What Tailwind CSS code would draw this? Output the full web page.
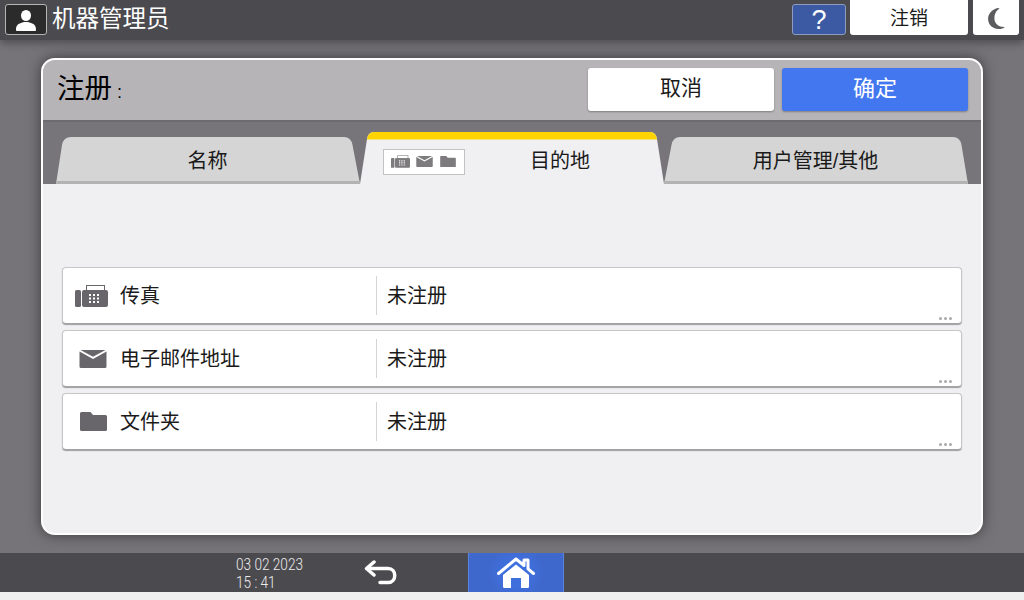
<!DOCTYPE html>
<html lang="zh-CN">
<head>
  <meta charset="UTF-8">
  <title>注册</title>
  <script src="https://cdn.jsdelivr.net/npm/@tailwindcss/browser@4"></script>
</head>
<body class="w-[1024px] h-[600px] overflow-hidden flex flex-col bg-[#767478] text-[#1a1a1a] font-['Liberation_Sans','Noto_Sans_CJK_SC',sans-serif]">
  <!-- icon sprites -->
  <svg class="hidden">
    <symbol id="fax" viewBox="0 0 33 22">
      <rect x="0" y="5" width="6" height="17" rx="1.5" fill="currentColor"/>
      <path d="M7 7a2 2 0 0 1 2-2h2V0h19v5h1a2 2 0 0 1 2 2v13a2 2 0 0 1-2 2H9a2 2 0 0 1-2-2z" fill="currentColor"/>
      <rect x="12" y="1" width="17" height="4" fill="#fff"/>
      <path d="M14 9h2v2h-2zM18 9h2v2h-2zM22 9h2v2h-2zM14 12.500h2v2h-2zM18 12.500h2v2h-2zM22 12.500h2v2h-2zM14 16h2v2h-2zM18 16h2v2h-2zM22 16h2v2h-2z" fill="#fff"/>
    </symbol>
    <symbol id="mail" viewBox="0 0 27 18">
      <path d="M0 1.500 13.500 9 27 1.500V16.500a1.500 1.500 0 0 1-1.500 1.500h-24A1.500 1.500 0 0 1 0 16.500z" fill="currentColor"/>
      <path d="M1 0h25L13.500 6.800z" fill="currentColor"/>
    </symbol>
    <symbol id="folder" viewBox="0 0 27 19">
      <path d="M0 1.500A1.500 1.500 0 0 1 1.500 0h9L13 3h12.500A1.500 1.500 0 0 1 27 4.500v13a1.500 1.500 0 0 1-1.500 1.500h-24A1.500 1.500 0 0 1 0 17.500z" fill="currentColor"/>
    </symbol>
  </svg>

  <!-- Top bar -->
  <header class="h-10 shrink-0 bg-[#4b4a4f] flex items-start pl-[5px] pr-[5px] relative z-10 shadow-[0_3px_8px_rgba(0,0,0,0.35)]">
    <div class="mt-1 w-[42px] h-[31px] rounded-[3px] border border-[#b5b5b5] bg-[#2b2b2b] flex items-center justify-center">
      <svg class="w-[22px] h-[22px] text-white" viewBox="0 0 22 22">
        <ellipse cx="11" cy="6.500" rx="5" ry="5.500" fill="currentColor"/>
        <path d="M1 21c0-4 1.500-6 5-7l3-1h4l3 1c3.500 1 5 3 5 7 0 .7-.5 1-1 1H2c-.5 0-1-.3-1-1z" fill="currentColor"/>
      </svg>
    </div>
    <span class="ml-[5px] mt-[2px] text-[23.500px] leading-[34px] text-white">机器管理员</span>
    <div class="ml-auto flex items-start">
      <div class="mt-1 w-[54px] h-[31px] rounded-[3px] border border-[#8d9cc0] bg-[#3b5aa3] text-white text-[27px] leading-[30px] font-medium text-center">?</div>
      <div class="ml-1 w-[118px] h-[35px] rounded-b-[3px] bg-white text-[19px] leading-[38px] text-center">注销</div>
      <div class="ml-[5px] w-[46px] h-[35px] rounded-b-[3px] bg-white flex items-center justify-center">
        <svg class="w-[17px] h-[21px] text-[#5c5c5f] mt-[1px]" viewBox="0 0 16 20">
          <path d="M9 0C3.500 1.500 0 5.500 0 10.500 0 16 4.500 20 10 20c2.500 0 4.500-.7 6-2-5 .5-10-2.500-10-8S8.500 2 11 .8C10.500.3 9.800 0 9 0z" fill="currentColor"/>
        </svg>
      </div>
    </div>
  </header>

  <!-- Main -->
  <main class="flex-1 min-h-0 px-[41px] pt-[18px]">
    <div class="w-[942px] h-[477px] rounded-[14px] border-2 border-white bg-[#f0eff2] overflow-hidden shadow-[0_0_14px_rgba(0,0,0,0.5)] flex flex-col">
      <!-- Dialog head -->
      <div class="h-[60px] shrink-0 bg-[#b6b4b6] flex items-start pl-[14px] pr-[13px] pt-2">
        <span class="text-[27.500px] leading-[41px] text-black">注册<span class="text-[18px] ml-[5px]">:</span></span>
        <button class="ml-auto w-[186px] h-[43px] pb-[3px] rounded-[3px] bg-white text-[21px] shadow-[0_1px_2px_rgba(0,0,0,0.3)]">取消</button>
        <button class="ml-2 w-[186px] h-[43px] pb-[3px] rounded-[3px] bg-[#4377ef] text-white text-[22px] shadow-[0_1px_2px_rgba(0,0,0,0.3)]">确定</button>
      </div>

      <!-- Tabs -->
      <div class="h-[64px] shrink-0 bg-[#777579] border-t-2 border-[#6d6b6f] pl-[13px] grid grid-cols-[304px_304px_304px] items-end">
        <div class="relative h-[47px] flex items-center justify-center">
          <svg class="absolute inset-0 w-[304px] h-[47px]" viewBox="0 0 304 47">
            <path d="M0 47 6 8Q7.500 0 15 0H288Q295 0 296.500 8L304 47z" fill="#d5d5d5"/>
            <path d="M.5 44H303.500L304 47H0z" fill="#b3b3b3"/>
          </svg>
          <span class="relative text-[20px] mr-[1px]">名称</span>
        </div>
        <div class="relative h-[52px] flex items-center">
          <svg class="absolute inset-0 w-[304px] h-[52px]" viewBox="0 0 304 52">
            <path d="M0 52 7 7Q8 0 14 0H290Q296 0 297 7L304 52z" fill="#f0eff2"/>
            <path d="M7 7.500Q8 0 14 0H290Q296 0 297 7.500z" fill="#ffd400"/>
          </svg>
          <div class="relative ml-[23px] mt-[7px] w-[82px] h-[26px] border border-[#c2c2c2] bg-white flex items-center pl-[7px] text-[#7d7b7e]">
            <svg class="w-[19px] h-[13px]"><use href="#fax"/></svg>
            <svg class="ml-[6px] w-[17px] h-[11px]"><use href="#mail"/></svg>
            <svg class="ml-[7px] w-[16px] h-[11px]"><use href="#folder"/></svg>
          </div>
          <span class="relative ml-[65px] mt-[6px] text-[20px]">目的地</span>
        </div>
        <div class="relative h-[47px] flex items-center justify-center">
          <svg class="absolute inset-0 w-[304px] h-[47px]" viewBox="0 0 304 47">
            <path d="M0 47 7.500 8Q9 0 16 0H289Q296 0 297.500 8L304 47z" fill="#d5d5d5"/>
            <path d="M.5 44H303.500L304 47H0z" fill="#b3b3b3"/>
          </svg>
          <span class="relative text-[20px] mr-[1px]">用户管理/其他</span>
        </div>
      </div>

      <!-- Destination rows -->
      <div class="flex-1 pt-[83px] px-[19px] flex flex-col gap-[6px]">
        <div class="relative w-[900px] h-[57px] rounded-[4px] bg-white border border-[#c6c6c6] border-b-[#a3a3a3] shadow-[0_1px_1px_rgba(0,0,0,0.35)] flex items-center">
          <div class="w-[45px] flex justify-end text-[#68666a]"><svg class="w-[33px] h-[22px]"><use href="#fax"/></svg></div>
          <span class="ml-[12px] w-[256px] text-[20px]">传真</span>
          <span class="h-[39px] w-px bg-[#d4d4d4]"></span>
          <span class="ml-[10px] text-[20px]">未注册</span>
          <span class="absolute right-[9px] bottom-[3px] flex gap-[2px]"><i class="size-[3px] bg-[#aaaaaa] rounded-full"></i><i class="size-[3px] bg-[#aaaaaa] rounded-full"></i><i class="size-[3px] bg-[#aaaaaa] rounded-full"></i></span>
        </div>
        <div class="relative w-[900px] h-[57px] rounded-[4px] bg-white border border-[#c6c6c6] border-b-[#a3a3a3] shadow-[0_1px_1px_rgba(0,0,0,0.35)] flex items-center">
          <div class="w-[45px] flex justify-end text-[#68666a]"><svg class="w-[28px] h-[18px] mr-[1px]"><use href="#mail"/></svg></div>
          <span class="ml-[12px] w-[256px] text-[20px]">电子邮件地址</span>
          <span class="h-[39px] w-px bg-[#d4d4d4]"></span>
          <span class="ml-[10px] text-[20px]">未注册</span>
          <span class="absolute right-[9px] bottom-[3px] flex gap-[2px]"><i class="size-[3px] bg-[#aaaaaa] rounded-full"></i><i class="size-[3px] bg-[#aaaaaa] rounded-full"></i><i class="size-[3px] bg-[#aaaaaa] rounded-full"></i></span>
        </div>
        <div class="relative w-[900px] h-[57px] rounded-[4px] bg-white border border-[#c6c6c6] border-b-[#a3a3a3] shadow-[0_1px_1px_rgba(0,0,0,0.35)] flex items-center">
          <div class="w-[45px] flex justify-end text-[#68666a]"><svg class="w-[27px] h-[19px] mr-[1px]"><use href="#folder"/></svg></div>
          <span class="ml-[12px] w-[256px] text-[20px]">文件夹</span>
          <span class="h-[39px] w-px bg-[#d4d4d4]"></span>
          <span class="ml-[10px] text-[20px]">未注册</span>
          <span class="absolute right-[9px] bottom-[3px] flex gap-[2px]"><i class="size-[3px] bg-[#aaaaaa] rounded-full"></i><i class="size-[3px] bg-[#aaaaaa] rounded-full"></i><i class="size-[3px] bg-[#aaaaaa] rounded-full"></i></span>
        </div>
      </div>
    </div>
  </main>

  <!-- Bottom bar -->
  <footer class="h-[39px] shrink-0 bg-[#4b4a4f] flex items-stretch pl-[236px]">
    <div class="w-[66px] pt-[2px] text-[#ececec] text-[17px] font-['Roboto',sans-serif] font-light whitespace-nowrap origin-left scale-x-[.8]">
      <div class="h-[18px] leading-[18px]">03 02 2023</div>
      <div class="h-[18px] leading-[18px]">15 : 41</div>
    </div>
    <div class="ml-[62px] flex items-center">
      <svg class="w-[33px] h-[25px] text-white" viewBox="0 0 33 25" fill="none" stroke="currentColor">
        <path d="M10 2 2.500 8.500 10 15" stroke-width="3.500" stroke-linejoin="round" stroke-linecap="round"/>
        <path d="M4 8.500h20c9 0 9 14 0 14h-8" stroke-width="3.500" stroke-linecap="round"/>
      </svg>
    </div>
    <div class="ml-[71px] w-[96px] border-x border-[#5b84e0] bg-[radial-gradient(circle,#3f74ea_0%,#3f68cc_55%)] flex items-center justify-center">
      <svg class="w-[38px] h-[31px] text-white" viewBox="0 0 38 31">
        <path d="M1.500 16.500 19 2l8 6.500V3h4v8.800l5.500 4.700" fill="none" stroke="currentColor" stroke-width="3" stroke-linecap="round" stroke-linejoin="round"/>
        <path d="M6 18 19 7.500 32 18v11.500a1.500 1.500 0 0 1-1.500 1.500H7.500A1.500 1.500 0 0 1 6 29.500z" fill="currentColor"/>
        <rect x="14" y="18" width="10" height="13" fill="#3f6fdc"/>
        <rect x="14" y="18" width="10" height="3" fill="#fff"/>
      </svg>
    </div>
  </footer>
  <div class="h-2 shrink-0 bg-[#f0f0f0]"></div>
</body>
</html>
